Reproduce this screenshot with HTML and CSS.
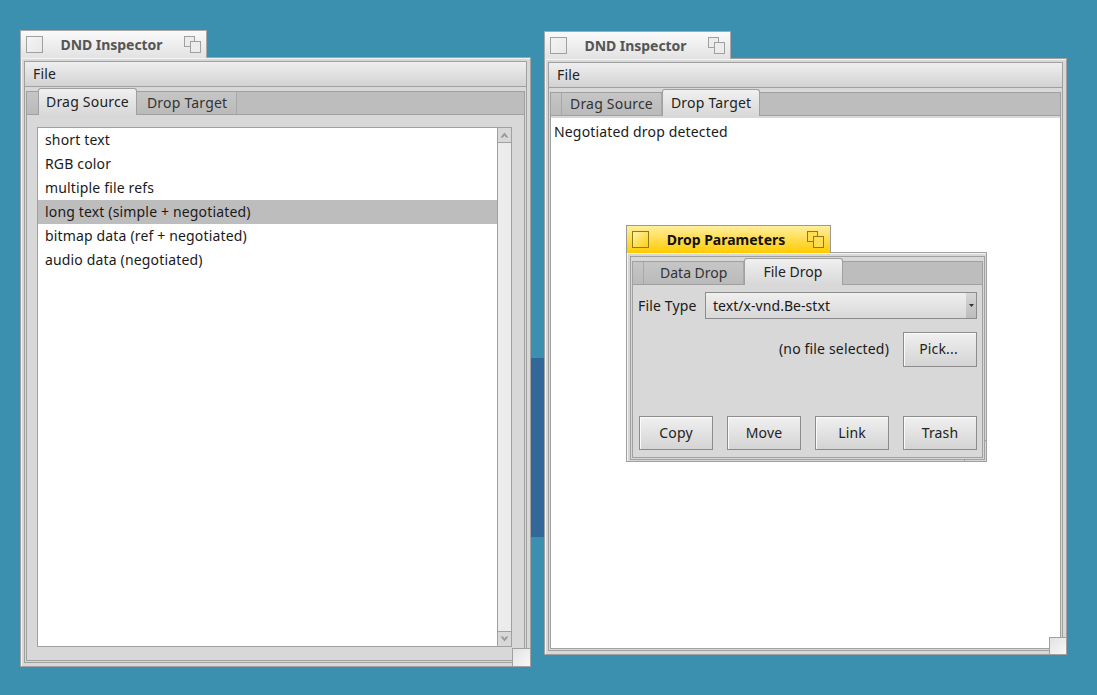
FILE: index.html
```html
<!DOCTYPE html>
<html lang="en">
<head>
    <meta charset="UTF-8">
    <meta name="viewport" content="width=device-width, initial-scale=1.0">
    <title>DND Inspector</title>
    <link rel="stylesheet" href="styles.css">
</head>
<body>
    <div class="behind"></div>

    <div class="window win-source">
        <div class="titlebar">
            <span class="close-box"></span>
            <span class="title">DND Inspector</span>
            <svg class="zoom-box" width="17" height="17" viewBox="0 0 17 17"><rect x="0.5" y="0.5" width="10" height="10"/><rect x="6.5" y="5.5" width="10" height="11"/></svg>
        </div>
        <div class="frame">
            <div class="frame-inner">
                <div class="menubar"><span>File</span></div>
                <div class="tabview">
                    <div class="tabstrip">
                        <span class="tab-gap"></span>
                        <span class="tab active">Drag Source</span>
                        <span class="tab">Drop Target</span>
                    </div>
                    <div class="tab-body source-body">
                        <div class="listbox">
                            <ul class="list">
                                <li>short text</li>
                                <li>RGB color</li>
                                <li>multiple file refs</li>
                                <li class="selected">long text (simple + negotiated)</li>
                                <li>bitmap data (ref + negotiated)</li>
                                <li>audio data (negotiated)</li>
                            </ul>
                            <div class="scrollbar">
                                <div class="arrow"><svg width="9" height="6" viewBox="0 0 9 6"><path d="M4.5 0.5L8.5 5.5H6L4.5 3.5L3 5.5H0.5Z"/></svg></div>
                                <div class="track"></div>
                                <div class="arrow"><svg width="9" height="6" viewBox="0 0 9 6"><path d="M4.5 5.5L8.5 0.5H6L4.5 2.5L3 0.5H0.5Z"/></svg></div>
                            </div>
                        </div>
                    </div>
                </div>
            </div>
        </div>
        <div class="resize-corner"></div>
    </div>

    <div class="window win-target">
        <div class="titlebar">
            <span class="close-box"></span>
            <span class="title">DND Inspector</span>
            <svg class="zoom-box" width="17" height="17" viewBox="0 0 17 17"><rect x="0.5" y="0.5" width="10" height="10"/><rect x="6.5" y="5.5" width="10" height="11"/></svg>
        </div>
        <div class="frame">
            <div class="frame-inner">
                <div class="menubar"><span>File</span></div>
                <div class="tabview">
                    <div class="tabstrip">
                        <span class="tab-gap"></span>
                        <span class="tab">Drag Source</span>
                        <span class="tab active">Drop Target</span>
                    </div>
                    <div class="tab-body target-body">Negotiated drop detected</div>
                </div>
            </div>
        </div>
        <div class="resize-corner"></div>
    </div>

    <div class="window win-params">
        <div class="titlebar">
            <span class="close-box"></span>
            <span class="title">Drop Parameters</span>
            <svg class="zoom-box" width="17" height="17" viewBox="0 0 17 17"><rect x="0.5" y="0.5" width="10" height="10"/><rect x="6.5" y="5.5" width="10" height="11"/></svg>
        </div>
        <div class="frame">
            <div class="resize-corner"></div>
            <div class="frame-inner">
                <div class="tabview">
                    <div class="tabstrip">
                        <span class="tab-gap"></span>
                        <span class="tab">Data Drop</span>
                        <span class="tab active">File Drop</span>
                    </div>
                    <div class="tab-body params-body">
                        <div class="type-row">
                            <span>File Type</span>
                            <div class="select">
                                <span class="select-value">text/x-vnd.Be-stxt</span>
                                <span class="select-arrow"><svg width="5" height="3" viewBox="0 0 5 3"><path d="M0 0H5L2.5 3Z"/></svg></span>
                            </div>
                        </div>
                        <div class="pick-row">
                            <span>(no file selected)</span>
                            <button class="btn">Pick...</button>
                        </div>
                        <div class="action-row">
                            <button class="btn">Copy</button>
                            <button class="btn">Move</button>
                            <button class="btn">Link</button>
                            <button class="btn">Trash</button>
                        </div>
                    </div>
                </div>
            </div>
        </div>
    </div>
</body>
</html>
```

FILE: styles.css
```css
* {
    box-sizing: border-box;
}
html, body {
    height: 100%;
}
body {
    margin: 0;
    background-color: #3b90b0;
    font-family: "Noto Sans", sans-serif;
    font-size: 14px;
    letter-spacing: 0.16px;
    color: #1a1a1a;
    overflow: hidden;
}

/* desktop: windows sit on a free canvas */
.behind {
    position: absolute;
    left: 531px;
    top: 358px;
    width: 14px;
    height: 179px;
    background-color: #336699;
}
.window {
    position: absolute;
    z-index: 0;
    display: flex;
    flex-direction: column;
    align-items: flex-start;
}
.win-source {
    left: 20px;
    top: 30px;
    width: 511px;
    height: 637px;
}
.win-target {
    left: 544px;
    top: 31px;
    width: 523px;
    height: 624px;
}
.win-params {
    left: 626px;
    top: 225px;
    width: 361px;
    height: 237px;
}

/* title tab */
.titlebar {
    display: flex;
    align-items: center;
    width: 187px;
    height: 28px;
    margin-bottom: -1px;
    padding: 0 5px;
    border: 1px solid #a8a8a8;
    border-bottom: none;
    background: linear-gradient(#fafafa, #e2e2e2);
    position: relative;
    z-index: 1;
}
.close-box {
    width: 17px;
    height: 17px;
    border: 1px solid #a0a0a0;
    background: linear-gradient(135deg, #f4f4f4, #e8e8e8);
}
.title {
    flex: 1;
    text-align: center;
    font-weight: bold;
    letter-spacing: -0.04px;
    color: #555;
    line-height: 1;
    padding-right: 4px;
}
.zoom-box {
    fill: #ececec;
    stroke: #a0a0a0;
}
.win-params .titlebar {
    width: 205px;
    padding-right: 6px;
    background: linear-gradient(#ffef9c, #ffcb00);
    border-color: #9a9a9a;
}
.win-params .close-box {
    border-color: #8c7a20;
    background: linear-gradient(135deg, #fff2a8, #ffcf10);
}
.win-params .title {
    color: #111;
    letter-spacing: 0;
}
.win-params .zoom-box {
    fill: #ffdc50;
    stroke: #8c7a20;
}

/* window body */
.frame {
    flex: 1;
    width: 100%;
    min-height: 0;
    display: flex;
    position: relative;
    border: 1px solid #a0a0a0;
    background-color: #d8d8d8;
    padding: 3px;
    box-shadow: inset 1px 1px 0 #f4f4f4;
}
.frame-inner {
    flex: 1;
    min-width: 0;
    display: flex;
    flex-direction: column;
    position: relative;
    z-index: 1;
    border: 1px solid #a0a0a0;
    background-color: #d8d8d8;
}
.menubar {
    height: 25px;
    flex-shrink: 0;
    padding: 0 8px 2px;
    display: flex;
    align-items: center;
    border-bottom: 1px solid #a0a0a0;
    background: linear-gradient(#efefef, #d2d2d2);
    color: #222;
}
.tabview {
    flex: 1;
    min-height: 0;
    margin: 4px 1px 1px;
    display: flex;
    flex-direction: column;
    border: 1px solid #a0a0a0;
}
.tabstrip {
    display: flex;
    align-items: flex-end;
    height: 23px;
    flex-shrink: 0;
    background-color: #bdbdbd;
    border-bottom: 1px solid #a0a0a0;
}
.tab-gap {
    width: 11px;
    height: 22px;
    border-right: 1px solid #a8a8a8;
    background: linear-gradient(#c6c6c6, #bababa);
}
.tab {
    height: 22px;
    padding: 0 9px 0 8px;
    line-height: 21px;
    letter-spacing: 0.2px;
    color: #333;
    border-right: 1px solid #a8a8a8;
    background: linear-gradient(#c6c6c6, #bababa);
    white-space: nowrap;
}
.tab.active {
    height: 27px;
    margin-bottom: -1px;
    padding: 0 7px 0 8px;
    line-height: 25px;
    background: linear-gradient(#f0f0f0, #d8d8d8);
    border: 1px solid #a0a0a0;
    border-bottom: none;
    border-radius: 3px 3px 0 0;
    color: #222;
    position: relative;
}
.win-source .tab.active {
    padding-left: 7px;
}
.win-source .tab-gap {
    border-right: none;
}
.win-target .tab {
    padding-right: 8px;
}
.tab.active + .tab {
    padding-left: 10px;
}
.tab-body {
    flex: 1;
    min-height: 0;
}

/* source list */
.source-body {
    padding: 12px 12px 13px 10px;
    display: flex;
}
.listbox {
    flex: 1;
    display: flex;
    border: 1px solid #a0a0a0;
    background-color: #fff;
}
.list {
    flex: 1;
    margin: 0;
    padding: 0;
    list-style: none;
}
.list li {
    height: 24px;
    line-height: 24px;
    padding-left: 7px;
}
.list li.selected {
    background-color: #bdbdbd;
}
.scrollbar {
    width: 14px;
    display: flex;
    flex-direction: column;
    border-left: 1px solid #a0a0a0;
    background-color: #ececec;
}
.arrow {
    height: 14px;
    flex-shrink: 0;
    display: flex;
    align-items: center;
    justify-content: center;
    background-color: #d8d8d8;
    fill: #9a9a9a;
}
.track {
    flex: 1;
    border-top: 1px solid #a0a0a0;
    border-bottom: 1px solid #a0a0a0;
}

/* target pane */
.target-body {
    background-color: #fff;
    border-top: 2px solid #d8d8d8;
    padding: 4px 3px;
    line-height: 20px;
}

/* drop parameters */
.win-params .frame {
    padding: 3px 1px 1px 3px;
}
.win-params .tab {
    padding: 0 16px;
    letter-spacing: 0;
}
.win-params .tab.active {
    padding: 0 20px 0 18px;
}
.params-body {
    display: flex;
    flex-direction: column;
    padding: 7px 5px 7px;
}
.type-row {
    display: flex;
    align-items: center;
    justify-content: space-between;
    height: 27px;
}
.select {
    width: 272px;
    height: 27px;
    display: flex;
    align-items: center;
    justify-content: space-between;
    border: 1px solid #8c8c8c;
    background: linear-gradient(#efefef, #d8d8d8);
}
.select-value {
    padding-left: 7px;
    letter-spacing: 0.05px;
}
.select-arrow {
    width: 10px;
    height: 25px;
    display: flex;
    align-items: center;
    justify-content: center;
    background: linear-gradient(#d6d6d6, #bcbcbc);
    fill: #333;
}
.pick-row {
    display: flex;
    align-items: center;
    justify-content: flex-end;
    gap: 14px;
    margin-top: 13px;
}
.pick-row span {
    padding-bottom: 2px;
}
.btn {
    width: 74px;
    height: 34px;
    padding: 0 0 2px;
    font: inherit;
    letter-spacing: inherit;
    color: #222;
    border: 1px solid #8c8c8c;
    background: linear-gradient(#f0f0f0, #d4d4d4);
    box-shadow: inset 1px 1px 0 #fafafa;
}
.pick-row .btn {
    height: 35px;
    padding: 0 3px 2px 0;
}
.action-row {
    display: flex;
    justify-content: space-between;
    margin-top: auto;
    margin-left: 1px;
}

/* grip in the window corner */
.resize-corner {
    position: absolute;
    right: 0;
    bottom: 0;
    width: 18px;
    height: 18px;
    z-index: 2;
    border: 1px solid #a0a0a0;
    background: linear-gradient(135deg, #e2e2e2, #f8f8f8);
}
.win-source .resize-corner {
    width: 19px;
    height: 19px;
}
.win-params .resize-corner {
    right: -1px;
    bottom: -1px;
    width: 23px;
    height: 22px;
    z-index: 0;
    background: #d8d8d8;
}
```
